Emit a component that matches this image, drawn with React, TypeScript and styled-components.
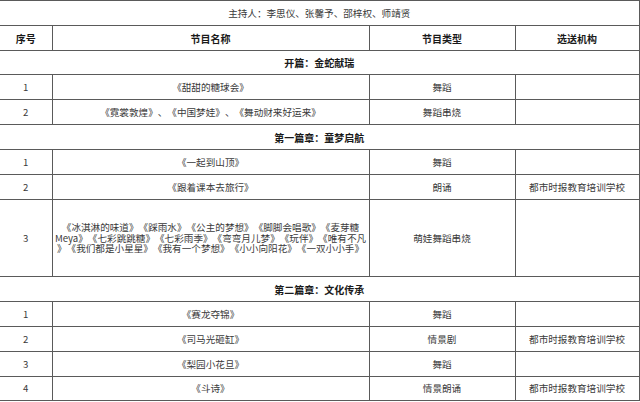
import React from "react";
import styled, { createGlobalStyle } from "styled-components";

const Global = createGlobalStyle`
  html, body { margin: 0; padding: 0; background: #fff; }
  body { font-family: "Noto Sans CJK SC", "Liberation Sans", sans-serif; }
`;

const Table = styled.table`
  border-collapse: collapse;
  table-layout: fixed;
  width: 639px;
  color: #3a3a3a;
  font-size: 9.6px;
  border-top: 1px solid #555;
  text-spacing-trim: space-all;
`;

const Row = styled.tr<{ $h?: number }>`
  height: ${(p) => p.$h ?? 25}px;
`;

const Cell = styled.td<{ $bold?: boolean }>`
  border: 1px solid #5a5a5a;
  padding: 0 2px;
  text-align: center;
  vertical-align: middle;
  line-height: 11px;
  white-space: nowrap;
  text-spacing-trim: space-all;
  font-weight: ${(p) => (p.$bold ? 700 : 400)};
  font-size: ${(p) => (p.$bold ? "10px" : "9.6px")};
  color: ${(p) => (p.$bold ? "#1a1a1a" : "#3a3a3a")};
  &:first-child { border-left: none; }
`;

const Line = styled.span`
  display: block;
  white-space: nowrap;
  line-height: 10.6px;
`;

type Item = { no: string; name: string; type: string; org?: string };
type Section = { title: string; items: Item[] };

const ORG = "都市时报教育培训学校";

const sections: Section[] = [
  {
    title: "开篇：金蛇献瑞",
    items: [
      { no: "1", name: "《甜甜的糖球会》", type: "舞蹈" },
      { no: "2", name: "《霓裳敦煌》、《中国梦娃》、《舞动财来好运来》", type: "舞蹈串烧" },
    ],
  },
  {
    title: "第一篇章：童梦启航",
    items: [
      { no: "1", name: "《一起到山顶》", type: "舞蹈" },
      { no: "2", name: "《跟着课本去旅行》", type: "朗诵", org: ORG },
      {
        no: "3",
        name: "《冰淇淋的味道》《踩雨水》《公主的梦想》《脚脚会唱歌》《麦芽糖|Meya》《七彩跳跳糖》《七彩雨季》《弯弯月儿梦》《玩伴》《唯有不凡|》《我们都是小星星》《我有一个梦想》《小小向阳花》《一双小小手》",
        type: "萌娃舞蹈串烧",
      },
    ],
  },
  {
    title: "第二篇章：文化传承",
    items: [
      { no: "1", name: "《赛龙夺锦》", type: "舞蹈" },
      { no: "2", name: "《司马光砸缸》", type: "情景剧", org: ORG },
      { no: "3", name: "《梨园小花旦》", type: "舞蹈" },
      { no: "4", name: "《斗诗》", type: "情景朗诵", org: ORG },
    ],
  },
];

export default function App() {
  return (
    <>
      <Global />
      <Table>
        <colgroup>
          <col style={{ width: 52 }} />
          <col style={{ width: 317 }} />
          <col style={{ width: 146 }} />
          <col style={{ width: 124 }} />
        </colgroup>
        <tbody>
          <Row $h={25}>
            <Cell colSpan={4}>主持人：李思仪、张馨予、邵梓权、师靖贤</Cell>
          </Row>
          <Row>
            <Cell $bold>序号</Cell>
            <Cell $bold>节目名称</Cell>
            <Cell $bold>节目类型</Cell>
            <Cell $bold>选送机构</Cell>
          </Row>
          {sections.map((s, si) => (
            <React.Fragment key={s.title}>
              <Row $h={si === 0 ? 24 : 25}>
                <Cell colSpan={4} $bold>
                  {s.title}
                </Cell>
              </Row>
              {s.items.map((it, ii) => {
                const lines = it.name.split("|");
                const tall = lines.length > 1;
                const last = si === sections.length - 1 && ii === s.items.length - 1;
                return (
                  <Row key={it.no + it.name} $h={tall ? 77 : last ? 24 : 25}>
                    <Cell>{it.no}</Cell>
                    <Cell>
                      {tall ? lines.map((l) => <Line key={l}>{l}</Line>) : it.name}
                    </Cell>
                    <Cell>{it.type}</Cell>
                    <Cell>{it.org ?? ""}</Cell>
                  </Row>
                );
              })}
            </React.Fragment>
          ))}
        </tbody>
      </Table>
    </>
  );
}
